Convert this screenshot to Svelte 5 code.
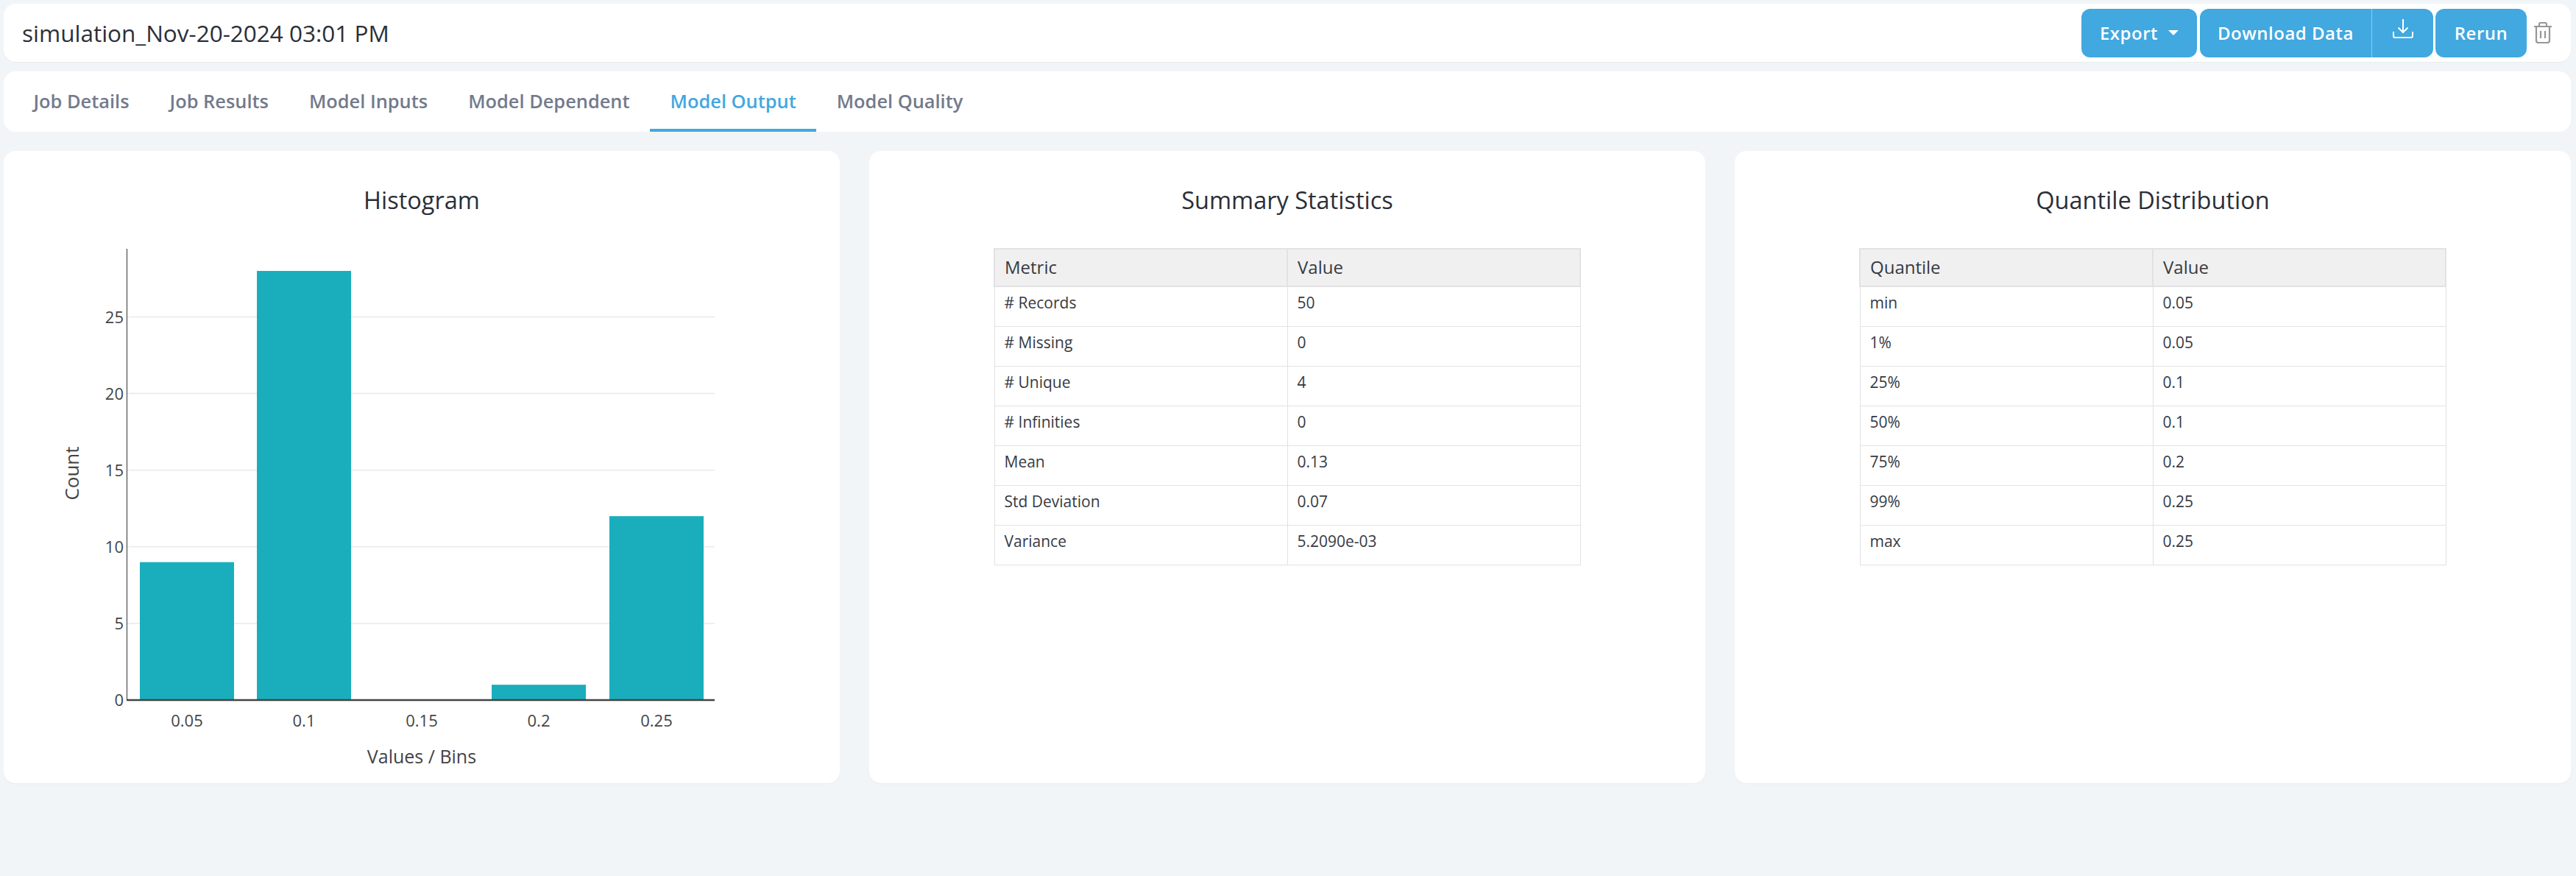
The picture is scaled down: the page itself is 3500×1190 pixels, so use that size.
<script>
let tabs = ['Job Details', 'Job Results', 'Model Inputs', 'Model Dependent', 'Model Output', 'Model Quality'];
let activeTab = 'Model Output';

let summary = [
    ['# Records', '50'],
    ['# Missing', '0'],
    ['# Unique', '4'],
    ['# Infinities', '0'],
    ['Mean', '0.13'],
    ['Std Deviation', '0.07'],
    ['Variance', '5.2090e-03']
];

let quantiles = [
    ['min', '0.05'],
    ['1%', '0.05'],
    ['25%', '0.1'],
    ['50%', '0.1'],
    ['75%', '0.2'],
    ['99%', '0.25'],
    ['max', '0.25']
];

let tables = [
    { title: 'Summary Statistics', head: 'Metric', rows: summary },
    { title: 'Quantile Distribution', head: 'Quantile', rows: quantiles }
];

// chart coordinates are relative to the histogram card
let baseY = 746;
let unit = 20.82;
let bars = [
    { label: '0.05', count: 9, x: 185 },
    { label: '0.1', count: 28, x: 344 },
    { label: '0.15', count: 0, x: 504 },
    { label: '0.2', count: 1, x: 663 },
    { label: '0.25', count: 12, x: 823 }
];
let ticks = [0, 5, 10, 15, 20, 25];
</script>

<div class="page">
    <header class="card topbar">
        <h1>simulation_Nov-20-2024 03:01 PM</h1>
        <div class="actions">
            <button class="btn export">Export <span class="caret"></span></button>
            <div class="btn split">
                <span class="split-label">Download Data</span>
                <span class="split-icon">
                    <svg width="28" height="28" viewBox="0 0 28 28" fill="none" stroke="#fff" stroke-width="2">
                        <path d="M14 0v18M7.5 11.5l6.500 6.500 6.500-6.500" />
                        <path d="M1 17v6a2 2 0 0 0 2 2h22a2 2 0 0 0 2-2v-6" />
                    </svg>
                </span>
            </div>
            <button class="btn rerun">Rerun</button>
            <svg class="trash" width="26" height="29" viewBox="0 0 26 29" fill="none" stroke="#97979b" stroke-width="2.200">
                <path d="M1 6h24M8 6V3a2 2 0 0 1 2-2h6a2 2 0 0 1 2 2v3" />
                <path d="M4 6v19a3 3 0 0 0 3 3h12a3 3 0 0 0 3-3V6" />
                <path d="M10 12v10M16 12v10" />
            </svg>
        </div>
    </header>

    <nav class="card tabs">
        {#each tabs as tab}
            <div class="tab" class:active={tab === activeTab}>{tab}</div>
        {/each}
    </nav>

    <div class="grid">
        <section class="card panel">
            <h2>Histogram</h2>
            <svg class="chart" width="1136" height="859" viewBox="0 0 1136 859">
                {#each ticks as t}
                    {#if t > 0}
                        <line x1="168" x2="966" y1={baseY - t * unit} y2={baseY - t * unit} stroke="#eeeeee" stroke-width="2" />
                    {/if}
                    <text x="163" y={baseY - t * unit + 8} text-anchor="end" class="tick">{t}</text>
                {/each}
                {#each bars as bar}
                    {#if bar.count > 0}
                        <rect x={bar.x} y={baseY - bar.count * unit} width="128" height={bar.count * unit} fill="#1aaebc" />
                    {/if}
                    <text x={bar.x + 64} y="782" text-anchor="middle" class="tick">{bar.label}</text>
                {/each}
                <line x1="167.500" x2="167.500" y1="133" y2="747" stroke="#333333" stroke-width="1" />
                <line x1="168" x2="966" y1="746" y2="746" stroke="#444444" stroke-width="2.500" />
                <text x="568" y="832" text-anchor="middle" class="axis">Values / Bins</text>
                <text transform="translate(102 438) rotate(-90)" text-anchor="middle" class="axis count">Count</text>
            </svg>
        </section>

        {#each tables as table}
            <section class="card panel">
                <h2>{table.title}</h2>
                <table>
                    <thead>
                        <tr><th>{table.head}</th><th>Value</th></tr>
                    </thead>
                    <tbody>
                        {#each table.rows as row}
                            <tr><td>{row[0]}</td><td>{row[1]}</td></tr>
                        {/each}
                    </tbody>
                </table>
            </section>
        {/each}
    </div>
</div>

<style>
    :global(body) {
        background-color: #f1f5f8;
        font-family: "Open Sans", sans-serif;
    }

    .page {
        height: 1190px;
        box-sizing: border-box;
        padding: 5px 7px 0 5px;
    }

    .card {
        background-color: #fff;
        border-radius: 16px;
    }

    .topbar {
        height: 79px;
        display: flex;
        align-items: center;
        justify-content: space-between;
        box-sizing: border-box;
        padding: 0 25px 0 25px;
        box-shadow: 0 1px 1px #e8ebee;
    }

    h1 {
        margin: 0;
        font-size: 31.500px;
        font-weight: 400;
        color: #2b2f38;
    }

    .actions {
        display: flex;
        align-items: center;
    }

    .btn {
        height: 66px;
        box-sizing: border-box;
        border: none;
        border-radius: 12px;
        background-color: #41a8e0;
        color: #fff;
        font-family: inherit;
        font-size: 24px;
        font-weight: 600;
        letter-spacing: 0.5px;
        display: flex;
        align-items: center;
        padding: 0;
    }

    .export {
        width: 157px;
        justify-content: center;
        margin-right: 4px;
    }

    .caret {
        margin-left: 14px;
        border-left: 7px solid transparent;
        border-right: 7px solid transparent;
        border-top: 7px solid #fff;
    }

    .split {
        width: 317px;
        margin-right: 3px;
    }

    .split-label {
        width: 233px;
        height: 100%;
        display: flex;
        align-items: center;
        justify-content: center;
        border-right: 1px solid #8fcbec;
    }

    .split-icon {
        flex: 1;
        display: flex;
        justify-content: center;
        margin-top: -10px;
    }

    .rerun {
        width: 124px;
        justify-content: center;
    }

    .trash {
        margin-left: 9px;
    }

    .tabs {
        height: 82px;
        margin-top: 13px;
        display: flex;
        padding-left: 13px;
    }

    .tab {
        padding: 2px 27.500px 0;
        display: flex;
        align-items: center;
        font-size: 25.400px;
        font-weight: 600;
        color: #737a8c;
        box-sizing: border-box;
        border-bottom: 4px solid transparent;
    }

    .tab.active {
        color: #41a8e0;
        border-bottom-color: #41a8e0;
    }

    .grid {
        margin-top: 26px;
        display: grid;
        grid-template-columns: repeat(3, 1136px);
        gap: 40px;
    }

    .panel {
        height: 859px;
        position: relative;
        box-shadow: 0 1px 1px #e8ebee;
    }

    h2 {
        margin: 0;
        padding-top: 45px;
        text-align: center;
        font-size: 32.500px;
        line-height: 44px;
        font-weight: 400;
        color: #2b2f38;
    }

    .chart {
        position: absolute;
        left: 0;
        top: 0;
    }

    .tick {
        font-size: 22px;
        fill: #444;
    }

    .axis {
        font-size: 25px;
        fill: #444;
    }

    .count {
        font-size: 26px;
    }

    table {
        width: 798px;
        margin: 43px auto 0;
        border-collapse: collapse;
        font-size: 21px;
        color: #363a43;
        table-layout: fixed;
    }

    th, td {
        text-align: left;
        font-weight: 400;
        padding: 0 13px;
        border: 1px solid #e2e2e2;
    }

    th {
        height: 47px;
        font-size: 24px;
        padding-bottom: 2px;
        background-color: #f0f0f0;
        border: 2px solid #e2e2e2;
    }

    td {
        height: 54px;
        padding-bottom: 11px;
        box-sizing: border-box;
    }
</style>
